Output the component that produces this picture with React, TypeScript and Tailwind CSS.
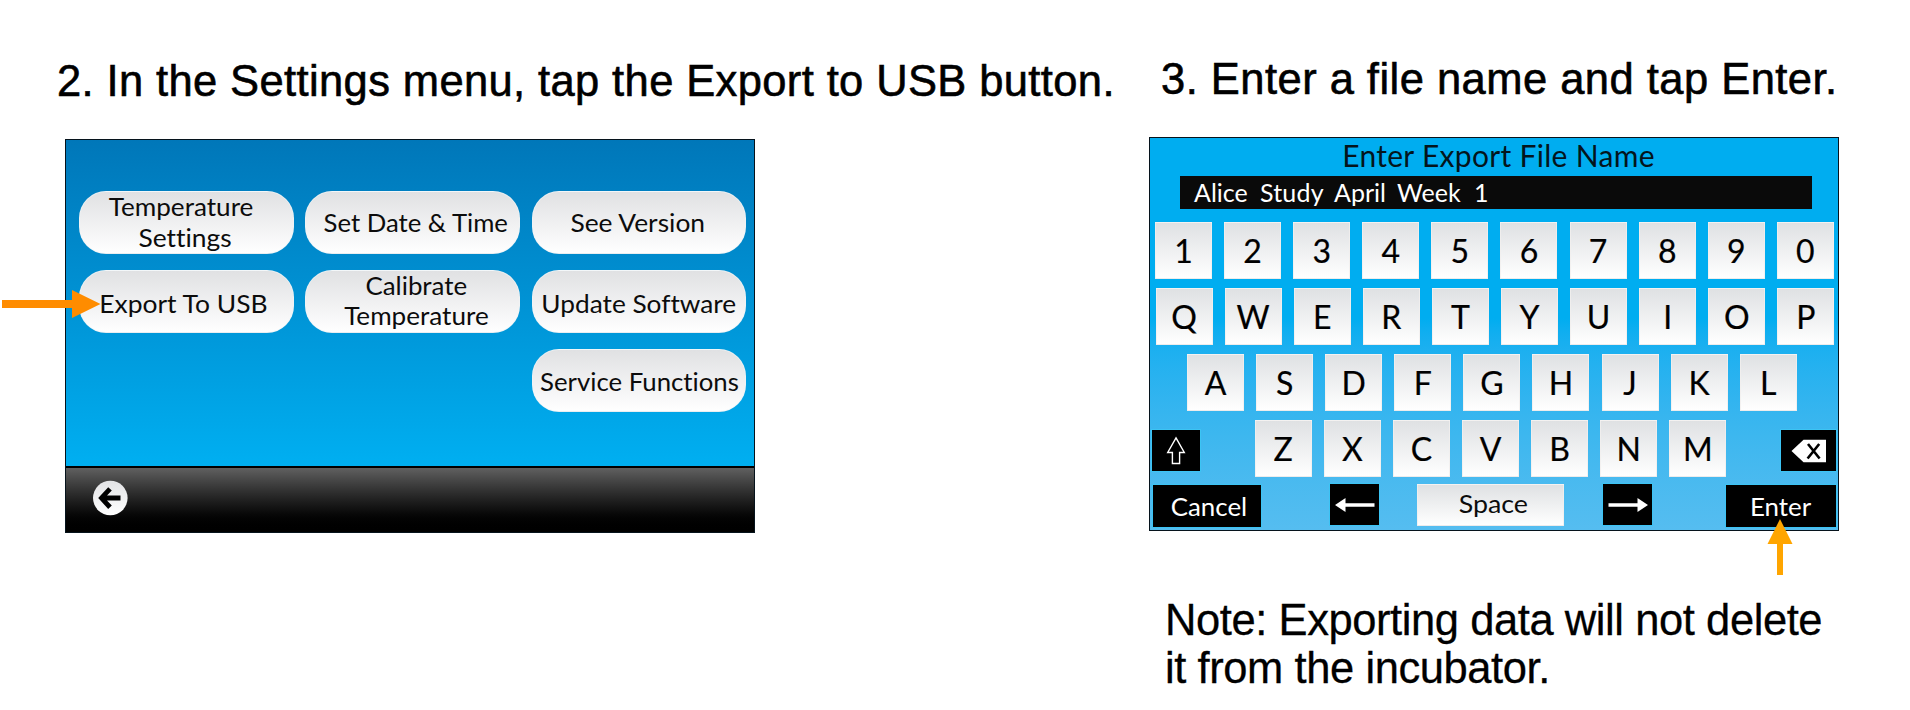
import React from "react";

type MenuButton = { id: string; lines: { text: string; style: string }[]; box?: string };

const MENU: MenuButton[] = [
  {
    id: "temperature",
    lines: [
      { text: "Temperature", style: "scale-x-[1.044] pr-[9px]" },
      { text: "Settings", style: "scale-x-[1.055] pr-[3px]" },
    ],
    box: "pb-[2px]",
  },
  { id: "date", lines: [{ text: "Set Date & Time", style: "scale-x-[1.028] pl-[6px]" }] },
  { id: "version", lines: [{ text: "See Version", style: "scale-x-[1.055] pr-[2px]" }] },
  { id: "export", lines: [{ text: "Export To USB", style: "scale-x-[1.058] pr-[6px]" }], box: "pt-[3px]" },
  {
    id: "calibrate",
    lines: [
      { text: "Calibrate", style: "scale-x-[1.035] pl-[8px]" },
      { text: "Temperature", style: "scale-x-[1.044] pl-[8px]" },
    ],
    box: "pb-[3px]",
  },
  { id: "update", lines: [{ text: "Update Software", style: "scale-x-[1.05] pr-[1px]" }], box: "pt-[3px]" },
  { id: "service", lines: [{ text: "Service Functions", style: "scale-x-[1.03]" }], box: "col-start-3 pt-[2px]" },
];

const BLACK_KEY = "flex items-center justify-center bg-black text-white shadow-[0_0_0_1px_#3cc4f4]";

function Keys({ letters }: { letters: string }) {
  return (
    <div className="flex gap-[12.1px]">
      {letters.split("").map((k) => (
        <button
          key={k}
          className="h-[57px] w-[57px] border border-[#f1efee]/80 bg-linear-to-b from-[#dfe1e3] to-white text-[32px] leading-[55px] text-black [-webkit-text-stroke:0.2px_black]"
        >
          {k}
        </button>
      ))}
    </div>
  );
}

function SettingsScreen() {
  return (
    <div className="flex h-[394px] w-[690px] flex-col border border-[#06131c] bg-linear-to-b from-[#0077b9] to-[#00aff1] to-[83%]">
      <div className="grid h-[326px] auto-rows-[63px] grid-cols-[214.5px_214.5px_214.5px] content-start gap-x-[11.9px] gap-y-[16px] pt-[51px] pl-[13px]">
        {MENU.map((b) => (
          <button
            key={b.id}
            className={`flex flex-col items-center justify-center rounded-[27px] border border-[#eef3f7]/70 bg-linear-to-b from-[#e0e1e3] to-white text-[25px] leading-[30.5px] whitespace-nowrap text-[#0c0c0c] ${b.box ?? ""}`}
          >
            {b.lines.map((l) => (
              <span key={l.text} className={l.style}>
                {l.text}
              </span>
            ))}
          </button>
        ))}
      </div>
      <div className="flex flex-1 border-t-2 border-black bg-linear-to-b from-[#606060] to-black pt-[12px] pl-[27px]">
        <svg width="36" height="36" viewBox="0 0 36 36">
          <defs>
            <linearGradient id="disc" x1="0" y1="0" x2="0" y2="1">
              <stop offset="0" stopColor="#e2e3e5" />
              <stop offset="1" stopColor="#fff" />
            </linearGradient>
          </defs>
          <circle cx="17.3" cy="18" r="17.3" fill="url(#disc)" />
          <path d="M5.2 18 15.2 7.2 18.8 10.6 14 15.4H27.5V20.5H14L18.8 25.4 15.2 28.9Z" fill="#000" />
        </svg>
      </div>
    </div>
  );
}

function KeyboardScreen() {
  return (
    <div className="flex h-[394px] w-[690px] flex-col border border-[#06131c] bg-linear-to-b from-[#00adf0] from-[46%] via-[#3db7ef] via-[76%] to-[#55bdf0]">
      <h2 className="h-[38px] pt-[2px] pl-[9px] text-center text-[30px] leading-[30px] tracking-[0.3px] text-[#04151c]">
        Enter Export File Name
      </h2>
      <div className="ml-[30px] flex h-[33px] w-[632px] items-center bg-[#0a0a0a] pl-[14px] text-[25px] leading-[33px] text-white">
        <span className="w-[66px]">Alice</span>
        <span className="w-[74px] tracking-[0.2px]">Study</span>
        <span className="w-[63px]">April</span>
        <span className="w-[77px]">Week</span>
        <span>1</span>
      </div>
      <div className="mt-[13px] flex flex-col gap-[9px]">
        <div className="pl-[5px]">
          <Keys letters="1234567890" />
        </div>
        <div className="pl-[5.5px]">
          <Keys letters="QWERTYUIOP" />
        </div>
        <div className="pl-[37px]">
          <Keys letters="ASDFGHJKL" />
        </div>
        <div className="flex justify-between pr-[2px] pl-[2px]">
          <button className={`${BLACK_KEY} mt-[10px] h-[41px] w-[48px]`}>
            <svg width="20" height="29" viewBox="0 0 20 29" fill="none" stroke="#fff" strokeWidth="1.4">
              <path d="M10 1.8 18.3 16.5H13.6V27.5H6.4V16.5H1.7Z" />
            </svg>
          </button>
          <Keys letters="ZXCVBNM" />
          <button className={`${BLACK_KEY} mt-[10px] h-[41px] w-[55px]`}>
            <svg width="36" height="24" viewBox="0 0 36 24">
              <path d="M.5 12 12.5.8H35V23.2H12.5Z" fill="#fff" />
              <path d="M17 5 28.6 19.5M28.2 5 16.6 19.5" stroke="#000" strokeWidth="2.6" />
            </svg>
          </button>
        </div>
      </div>
      <div className="mt-[7px] flex pl-[3px] text-[25px] leading-[42px]">
        <button className={`${BLACK_KEY} mt-px h-[42px] w-[108px] pl-[3px]`}>
          <span className="scale-x-[1.035]">Cancel</span>
        </button>
        <button className={`${BLACK_KEY} ml-[69px] h-[41px] w-[49px]`}>
          <svg width="40" height="14" viewBox="0 0 40 14">
            <path d="M0 7 10.5 0V5.2H39.5V8.8H10.5V14Z" fill="#fff" />
          </svg>
        </button>
        <button className="ml-[38px] flex h-[42px] w-[147px] justify-center border border-[#f1efee]/80 bg-linear-to-b from-[#dfe1e3] to-white pl-[5px] leading-[36px] text-[#0c0c0c]">
          <span className="scale-x-[1.071]">Space</span>
        </button>
        <button className={`${BLACK_KEY} ml-[39px] h-[41px] w-[49px]`}>
          <svg width="40" height="14" viewBox="0 0 40 14">
            <path d="M40 7 29.5 0V5.2H.5V8.8H29.5V14Z" fill="#fff" />
          </svg>
        </button>
        <button className={`${BLACK_KEY} mt-px ml-[74px] h-[42px] w-[110px]`}>
          <span className="scale-x-[1.036]">Enter</span>
        </button>
      </div>
    </div>
  );
}

export default function App() {
  return (
    <main className="relative flex h-[710px] w-[1910px] overflow-hidden bg-white font-['Lato',sans-serif] text-black [font-variant-ligatures:none]">
      <section className="w-[1149px] shrink-0">
        <h1 className="mt-[57px] pl-[57px] font-['Liberation_Sans',sans-serif] text-[43.5px] leading-[48px] tracking-[0.38px] whitespace-nowrap [-webkit-text-stroke:0.6px_black]">
          2. In the Settings menu, tap the Export to USB button.
        </h1>
        <div className="mt-[34px] ml-[65px]">
          <SettingsScreen />
        </div>
      </section>
      <section className="flex-1">
        <h1 className="mt-[55px] pl-[12px] font-['Liberation_Sans',sans-serif] text-[43.5px] leading-[48px] tracking-[0.47px] whitespace-nowrap [-webkit-text-stroke:0.6px_black]">
          3. Enter a file name and tap Enter.
        </h1>
        <div className="mt-[34px]">
          <KeyboardScreen />
        </div>
        <p className="mt-[65px] pl-[16px] font-['Liberation_Sans',sans-serif] text-[43.5px] leading-[48px] tracking-[-0.42px] whitespace-nowrap [-webkit-text-stroke:0.3px_black]">
          Note: Exporting data will not delete
          <br />
          it from the incubator.
        </p>
      </section>
      <svg className="absolute top-[289px] left-[2px]" width="100" height="30" viewBox="0 0 100 30" fill="#ff8c00">
        <path d="M0 11H70V1L98.5 15 70 29V19H0Z" />
      </svg>
      <svg className="absolute top-[519px] left-[1767px]" width="26" height="56" viewBox="0 0 26 56" fill="#ffa500">
        <path d="M13 0 25.5 25H16V56H10V25H.5Z" />
      </svg>
    </main>
  );
}
